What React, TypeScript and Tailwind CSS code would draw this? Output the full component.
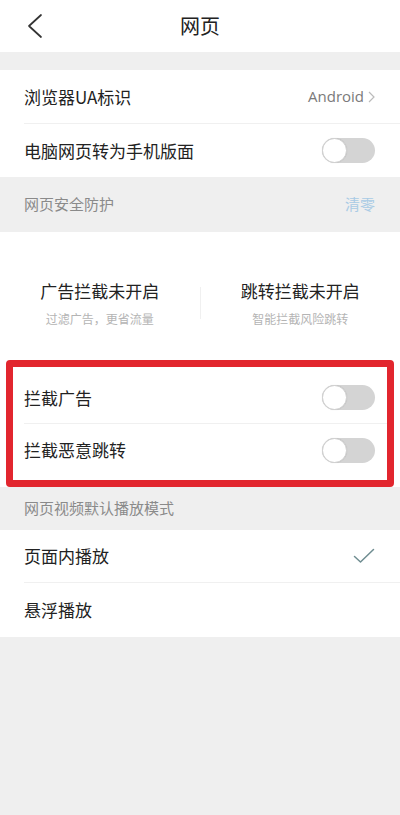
import React from "react";

const font = { fontFamily: '"Noto Sans CJK SC", "Noto Sans", sans-serif' };

function Toggle() {
  return (
    <div className="relative h-[25px] w-[53px] rounded-full bg-[#d4d4d4]">
      <div className="absolute left-0 top-0 h-[25px] w-[25px] rounded-full border border-[#d0d0d0] bg-white shadow-[0_0_1px_rgba(0,0,0,0.15)]" />
    </div>
  );
}

function Row({
  title,
  right,
  divider = true,
  h = "h-[53px]",
}: {
  title: string;
  right?: React.ReactNode;
  divider?: boolean;
  h?: string;
}) {
  return (
    <div className={`flex ${h} items-center justify-between pr-[25px] ${divider ? "border-b border-[#f0f0f0]" : ""}`}>
      <span className="text-[17px] text-[#222]">{title}</span>
      {right}
    </div>
  );
}

export default function App() {
  return (
    <div className="flex min-h-[815px] w-[400px] flex-col bg-[#efefef]" style={font}>
      {/* Header */}
      <div className="flex h-[52px] items-center bg-white">
        <div className="flex w-[70px] items-center pl-[26px]">
          <svg width="18" height="26" viewBox="0 0 18 26">
            <path d="M15 2 L3 13 L15 24" fill="none" stroke="#333" strokeWidth="1.7" strokeLinecap="round" strokeLinejoin="round" />
          </svg>
        </div>
        <div className="flex-1 text-center text-[20px] text-[#222]">网页</div>
        <div className="w-[70px]" />
      </div>
      <div className="h-[18px]" />

      {/* Rows */}
      <div className="bg-white pl-[24px]">
        <Row
          title="浏览器UA标识"
          h="h-[54px]"
          right={
            <div className="flex items-center gap-[4px] text-[15px] text-[#7a7a7a]">
              <span style={{ fontFamily: '"Open Sans", "Noto Sans", sans-serif' }}>Android</span>
              <svg width="7" height="12" viewBox="0 0 7 12">
                <path d="M1 1 L6 6 L1 11" fill="none" stroke="#bbb" strokeWidth="1.2" />
              </svg>
            </div>
          }
        />
        <Row title="电脑网页转为手机版面" divider={false} right={<Toggle />} />
      </div>

      {/* Section header */}
      <div className="flex h-[55px] items-center justify-between pl-[24px] pr-[25px]">
        <span className="text-[15px] text-[#8a8a8a]">网页安全防护</span>
        <span className="text-[15px] text-[#a9cbe5]">清零</span>
      </div>

      {/* Stats */}
      <div className="flex h-[128px] items-center bg-white pt-[14px]">
        <div className="flex flex-1 flex-col items-center">
          <span className="text-[17px] text-[#222]">广告拦截未开启</span>
          <span className="mt-[6px] text-[12px] text-[#b4b4b4]">过滤广告，更省流量</span>
        </div>
        <div className="h-[32px] w-px bg-[#f0f0f0]" />
        <div className="flex flex-1 flex-col items-center">
          <span className="text-[17px] text-[#222]">跳转拦截未开启</span>
          <span className="mt-[6px] text-[12px] text-[#b4b4b4]">智能拦截风险跳转</span>
        </div>
      </div>

      {/* Highlighted box */}
      <div className="bg-white px-[6px]">
        <div className="rounded-[4px] border-[7px] border-[#e2262e] pb-[4px] pl-[11px] pt-[5px]">
          <div className="flex h-[52px] items-center justify-between border-b border-[#f0f0f0] pr-[12px]">
            <span className="text-[17px] text-[#222]">拦截广告</span>
            <Toggle />
          </div>
          <div className="flex h-[52px] items-center justify-between pr-[12px]">
            <span className="text-[17px] text-[#222]">拦截恶意跳转</span>
            <Toggle />
          </div>
        </div>
      </div>

      {/* Section header 2 */}
      <div className="flex h-[43px] items-center pl-[24px]">
        <span className="text-[15px] text-[#8a8a8a]">网页视频默认播放模式</span>
      </div>

      <div className="bg-white pl-[24px]">
        <Row
          title="页面内播放"
          right={
            <svg width="22" height="16" viewBox="0 0 22 16">
              <path d="M1.5 8.5 L7.5 14 L20.5 1.5" fill="none" stroke="#6f8d91" strokeWidth="1.5" strokeLinecap="round" strokeLinejoin="round" />
            </svg>
          }
        />
        <Row title="悬浮播放" h="h-[54px]" divider={false} />
      </div>

      <div className="flex-1" />
    </div>
  );
}
